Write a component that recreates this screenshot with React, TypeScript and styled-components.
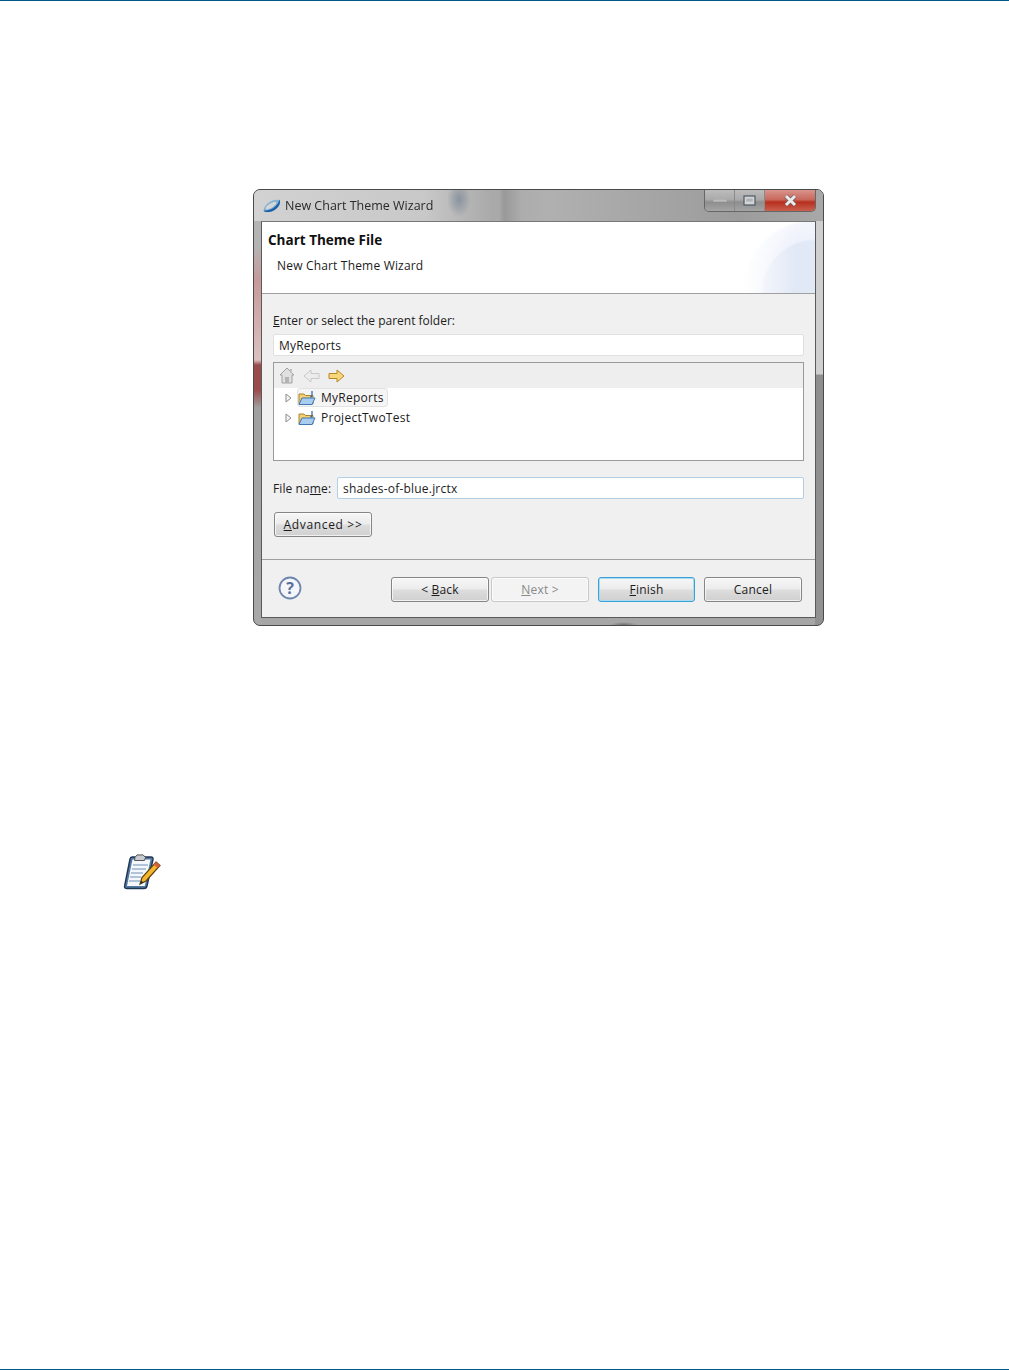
import * as React from 'react';
import styled, { createGlobalStyle } from 'styled-components';

const GlobalStyle = createGlobalStyle`
  html, body {
    margin: 0;
    padding: 0;
    background: #fff;
  }
`;

const Page = styled.div`
  width: 1009px;
  height: 1370px;
  display: flex;
  flex-direction: column;
  box-sizing: border-box;
  background: #fff;
  overflow: hidden;
  font-family: "Open Sans", "Noto Sans", sans-serif;
  font-size: 12px;
  color: #1c1c1c;
`;

const Rule = styled.div`
  height: 1px;
  flex: none;
  background: #005a87;
`;

const Content = styled.main`
  flex: 1;
  padding-top: 188px;
`;

const Dialog = styled.section`
  width: 571px;
  height: 437px;
  margin-left: 253px;
  box-sizing: border-box;
  border: 1px solid #4a4a4a;
  border-radius: 7px;
  padding: 0 7px 7px;
  display: flex;
  flex-direction: column;
  filter: blur(0.3px);
  background:
    linear-gradient(180deg, #b4b4b4 0, #b4b4b4 55px, #c69a9a 90px, #dcc0c0 170px, #9a4c4c 175px, #9a4c4c 200px, #a0a0a0 218px, #a8a8a8 100%) left top / 8px 100% no-repeat,
    linear-gradient(180deg, #cfcfcf 0, #cfcfcf 184px, #8e8e8e 185px, #929292 100%) right top / 8px 100% no-repeat,
    radial-gradient(ellipse 14px 3px at 65% 100%, #6e6e6e 0, transparent 100%) no-repeat,
    #a6a6a6;
`;

const TitleBar = styled.header`
  height: 31px;
  flex: none;
  margin: 0 -7px;
  padding: 0 7px 0 8px;
  display: flex;
  align-items: flex-start;
  justify-content: space-between;
  border-radius: 6px 6px 0 0;
  background:
    radial-gradient(ellipse 12px 18px at 36% 30%, rgba(80, 100, 125, 0.45) 0, transparent 100%) no-repeat,
    linear-gradient(90deg, transparent 43%, rgba(0, 0, 0, 0.1) 44%, transparent 47%) no-repeat,
    linear-gradient(90deg, #d2d2d2 0, #c8c8c8 30%, #a9a9a9 42%, #b0b0b0 52%, #9c9c9c 85%, #a8a8a8 100%);
`;

const TitleLeft = styled.div`
  display: flex;
  align-items: center;
  gap: 3px;
  height: 31px;
  font-size: 12.5px;
  color: #2a2a2a;
`;

const WindowButtons = styled.div`
  display: flex;
  height: 21px;
  border: 1px solid #666;
  border-top: 0;
  border-radius: 0 0 5px 5px;
  overflow: hidden;
`;

const WindowButton = styled.div<{ $kind: 'plain' | 'close' }>`
  width: ${p => (p.$kind === 'close' ? '50px' : '29px')};
  display: flex;
  align-items: center;
  justify-content: center;
  background: ${p =>
    p.$kind === 'close'
      ? 'linear-gradient(180deg, #d9948c 0, #c9685c 45%, #b8301e 58%, #c9604f 100%)'
      : 'linear-gradient(180deg, #bcbcbc 0, #aaaaaa 45%, #8e8e8e 58%, #a4a4a4 100%)'};
  & + & {
    border-left: 1px solid #8a8a8a;
  }
`;

const Client = styled.div`
  flex: 1;
  display: flex;
  flex-direction: column;
  background: #f0f0f0;
  border: 1px solid #5a5a5a;
  border-top-color: #777;
`;

const Banner = styled.div`
  height: 72px;
  flex: none;
  box-sizing: border-box;
  border-bottom: 1px solid #a0a0a0;
  background:
    linear-gradient(90deg, #fff 478px, rgba(255, 255, 255, 0) 535px) no-repeat,
    radial-gradient(circle 74px at 100% 100%, #e1e8f6 0, #e1e8f6 70%, #edf1fa 73%, #f3f6fc 96%, #fff 100%) no-repeat,
    #fff;
  padding: 9px 0 0 6px;
  display: flex;
  flex-direction: column;
`;

const BannerTitle = styled.div`
  font-size: 13.5px;
  font-weight: 700;
  line-height: 18px;
  color: #111;
`;

const BannerText = styled.div`
  line-height: 16px;
  margin: 9px 0 0 9px;
  letter-spacing: 0.18px;
`;

const Body = styled.div`
  height: 266px;
  flex: none;
  box-sizing: border-box;
  padding: 18px 11px 0;
  border-bottom: 1px solid #a0a0a0;
  display: flex;
  flex-direction: column;
  align-items: stretch;
`;

const FieldLabel = styled.label`
  line-height: 17px;
  white-space: nowrap;
  u {
    text-underline-offset: 1px;
  }
`;

const FileLabel = styled(FieldLabel)`
  width: 59px;
  flex: none;
  letter-spacing: 0.1px;
`;

const TextBox = styled.div<{ $focused?: boolean }>`
  height: 22px;
  flex: 1;
  box-sizing: border-box;
  background: #fff;
  border: 1px solid ${p => (p.$focused ? '#b4cfe4' : '#e0e0e0')};
  border-radius: 2px;
  padding: 0 5px;
  line-height: 21px;
  letter-spacing: 0.2px;
`;

const ParentBox = styled(TextBox)`
  flex: none;
  margin-top: 5px;
`;

const Tree = styled.div`
  height: 99px;
  flex: none;
  box-sizing: border-box;
  margin-top: 6px;
  border: 1px solid #9a9a9a;
  background: #fff;
`;

const TreeToolbar = styled.div`
  height: 25px;
  background: #eeeeee;
  display: flex;
  align-items: center;
  gap: 8px;
  padding-left: 5px;
`;

const TreeRow = styled.div`
  height: 20px;
  display: flex;
  align-items: flex-start;
  padding-left: 11px;
  gap: 5px;
  > svg {
    margin-top: 5px;
  }
`;

const TreeItem = styled.div<{ $selected?: boolean }>`
  height: 19px;
  box-sizing: border-box;
  display: flex;
  align-items: center;
  gap: 5px;
  padding: 0 3px 0 0;
  border: 1px solid ${p => (p.$selected ? '#e2e2e2' : 'transparent')};
  border-radius: 3px;
  background: ${p => (p.$selected ? '#f5f5f5' : 'transparent')};
  letter-spacing: 0.26px;
`;

const FileRow = styled.div`
  display: flex;
  align-items: center;
  margin-top: 16px;
  gap: 5px;
`;

const Button = styled.button<{ $width?: number; $state?: 'default' | 'disabled' }>`
  width: ${p => p.$width ?? 98}px;
  height: 25px;
  box-sizing: border-box;
  padding: 0;
  font: inherit;
  letter-spacing: 0.2px;
  color: ${p => (p.$state === 'disabled' ? '#8a8a8a' : '#1c1c1c')};
  border-radius: 3px;
  border: 1px solid ${p =>
    p.$state === 'default' ? '#3c9fd6' : p.$state === 'disabled' ? '#c8c8c8' : '#858585'};
  background: ${p =>
    p.$state === 'disabled'
      ? '#f3f3f3'
      : 'linear-gradient(180deg, #f6f6f6 0, #ededed 45%, #dcdcdc 55%, #d0d0d0 100%)'};
  box-shadow: inset 0 0 0 1px ${p => (p.$state === 'default' ? '#a8dcf2' : 'rgba(255,255,255,0.7)')};
`;

const AdvancedButton = styled(Button)`
  margin: 13px 0 0 1px;
  align-self: flex-start;
  letter-spacing: 0.65px;
`;

const Footer = styled.div`
  flex: 1;
  display: flex;
  align-items: center;
  padding: 1px 13px 0 16px;
`;

const HelpSlot = styled.div`
  display: flex;
  margin-top: -2px;
`;

const ButtonRow = styled.div`
  margin-left: auto;
  display: flex;
  align-items: center;
`;

const NavGap = styled.div<{ $w: number }>`
  width: ${p => p.$w}px;
`;

const Note = styled.svg`
  display: block;
  margin: 227px 0 0 122px;
`;

const EclipseLogo = () => (
  <svg width="20" height="18" viewBox="0 0 20 18">
    <ellipse cx="10" cy="9" rx="9.2" ry="4.6" transform="rotate(-32 10 9)" fill="#86b2d4" />
    <ellipse cx="9" cy="8.6" rx="6.2" ry="2.2" transform="rotate(-32 9 8.6)" fill="#d6d6d6" />
    <path d="M1.4 13.4 C3 16.4 12 15.6 16.4 9.4 C18.4 6.4 18.6 3.6 17 2.4 C17.4 6 13 10.4 9 12.2 C6 13.4 3 13.8 1.4 13.4Z" fill="#1b60a8" />
  </svg>
);

const HomeIcon = () => (
  <svg width="16" height="17" viewBox="0 0 16 17">
    <path d="M8 1 L15 8 H13 V16 H3 V8 H1 Z" fill="#e0e0e0" stroke="#a0a0a0" />
    <rect x="6" y="10" width="4" height="6" fill="#b4b4b4" />
    <rect x="11" y="2" width="2" height="4" fill="#c0c0c0" />
  </svg>
);

const Arrow = ({ dir, on }: { dir: 'left' | 'right'; on?: boolean }) => (
  <svg width="17" height="14" viewBox="0 0 17 14">
    <path
      d={dir === 'left' ? 'M1 7 L8 1 V4.5 H16 V9.5 H8 V13 Z' : 'M16 7 L9 1 V4.5 H1 V9.5 H9 V13 Z'}
      fill={on ? '#f7d878' : '#ececec'}
      stroke={on ? '#b8862a' : '#c8c8c8'}
      strokeLinejoin="round"
    />
  </svg>
);

const Twisty = () => (
  <svg width="7" height="10" viewBox="0 0 7 10">
    <path d="M1 1 L6 5 L1 9 Z" fill="#f6f6f6" stroke="#8c8c8c" />
  </svg>
);

const FolderIcon = () => (
  <svg width="18" height="16" viewBox="0 0 18 16">
    <path d="M1 14 V4 H6 L7.5 5.5 H15 V14 Z" fill="#f3cf72" stroke="#a88430" />
    <path d="M1 14.5 L4 8 H17 L14 14.5 Z" fill="#a9cdf0" stroke="#3f78b4" />
    <path d="M14 1 V6 Q14 7 12 7" fill="none" stroke="#2c62a8" strokeWidth="1.2" />
  </svg>
);

const HelpIcon = () => (
  <svg width="24" height="24" viewBox="0 0 24 24">
    <circle cx="12" cy="12" r="10.5" fill="#f4f6fa" stroke="#6f87ad" strokeWidth="1.8" />
    <text x="12" y="17.5" textAnchor="middle" fontSize="16" fontWeight="700" fontFamily="Open Sans, sans-serif" fill="#58719c">?</text>
  </svg>
);

const NoteIcon = () => (
  <Note width="40" height="38" viewBox="0 0 40 38">
    <path d="M10 4 H29 Q31.5 4 31 6.5 L25 33 Q24.5 35.5 22 35.5 H5 Q2 35.5 2.6 33 L8 6 Q8.4 4 10 4Z" fill="#54779f" stroke="#1f3554" strokeWidth="1.4" />
    <path d="M10.5 6.5 H28.5 L22.8 33 H5 Z" fill="#f4f8fc" />
    <path d="M11 12 H26 M10 16 H24 M9 20 H21 M8 24 H19 M7 28 H18" stroke="#6f8fb5" strokeWidth="1" />
    <path d="M13 4.5 Q14.5 0.5 18 2 Q21.5 0.5 23.5 4.5 L22.5 7.5 H12.5 Z" fill="#c8ccd2" stroke="#555" strokeWidth="1" />
    <path d="M34 9 L38 12.5 L24 28 L18 31 L20 24.5 Z" fill="#f4b62e" stroke="#5e4210" strokeWidth="1.2" />
    <path d="M34 9 L38 12.5 L35.5 15 L31.5 11.5 Z" fill="#d9603a" />
    <path d="M18 31 L19 27.5 L21.5 29.5 Z" fill="#2b2b2b" />
  </Note>
);

export default function App() {
  return (
    <Page>
      <GlobalStyle />
      <Rule />
      <Content>
        <Dialog>
          <TitleBar>
            <TitleLeft>
              <EclipseLogo />
              New Chart Theme Wizard
            </TitleLeft>
            <WindowButtons>
              <WindowButton $kind="plain">
                <svg width="14" height="4" viewBox="0 0 14 4"><rect width="14" height="3" fill="#bdbdbd" stroke="#8a8a8a" strokeWidth="0.5" /></svg>
              </WindowButton>
              <WindowButton $kind="plain">
                <svg width="13" height="11" viewBox="0 0 13 11"><rect x="1" y="1" width="11" height="9" fill="#d4d4d4" stroke="#4e5a66" strokeWidth="1.2" /><rect x="3.2" y="3.6" width="6.6" height="3" fill="#aeb4ba" /></svg>
              </WindowButton>
              <WindowButton $kind="close">
                <svg width="15" height="13" viewBox="0 0 15 13">
                  <path d="M3 2 L12 11 M12 2 L3 11" stroke="#6d5a5a" strokeWidth="4.4" />
                  <path d="M3 2 L12 11 M12 2 L3 11" stroke="#ececec" strokeWidth="3" />
                </svg>
              </WindowButton>
            </WindowButtons>
          </TitleBar>
          <Client>
            <Banner>
              <BannerTitle>Chart Theme File</BannerTitle>
              <BannerText>New Chart Theme Wizard</BannerText>
            </Banner>
            <Body>
              <FieldLabel><u>E</u>nter or select the parent folder:</FieldLabel>
              <ParentBox>MyReports</ParentBox>
              <Tree>
                <TreeToolbar>
                  <HomeIcon />
                  <Arrow dir="left" />
                  <Arrow dir="right" on />
                </TreeToolbar>
                <TreeRow>
                  <Twisty />
                  <TreeItem $selected>
                    <FolderIcon />
                    MyReports
                  </TreeItem>
                </TreeRow>
                <TreeRow>
                  <Twisty />
                  <TreeItem>
                    <FolderIcon />
                    ProjectTwoTest
                  </TreeItem>
                </TreeRow>
              </Tree>
              <FileRow>
                <FileLabel>File na<u>m</u>e:</FileLabel>
                <TextBox $focused>shades-of-blue.jrctx</TextBox>
              </FileRow>
              <AdvancedButton><u>A</u>dvanced &gt;&gt;</AdvancedButton>
            </Body>
            <Footer>
              <HelpSlot>
                <HelpIcon />
              </HelpSlot>
              <ButtonRow>
                <Button>&lt; <u>B</u>ack</Button>
                <NavGap $w={2} />
                <Button $state="disabled"><u>N</u>ext &gt;</Button>
                <NavGap $w={9} />
                <Button $state="default" $width={97}><u>F</u>inish</Button>
                <NavGap $w={9} />
                <Button>Cancel</Button>
              </ButtonRow>
            </Footer>
          </Client>
        </Dialog>
        <NoteIcon />
      </Content>
      <Rule />
    </Page>
  );
}
